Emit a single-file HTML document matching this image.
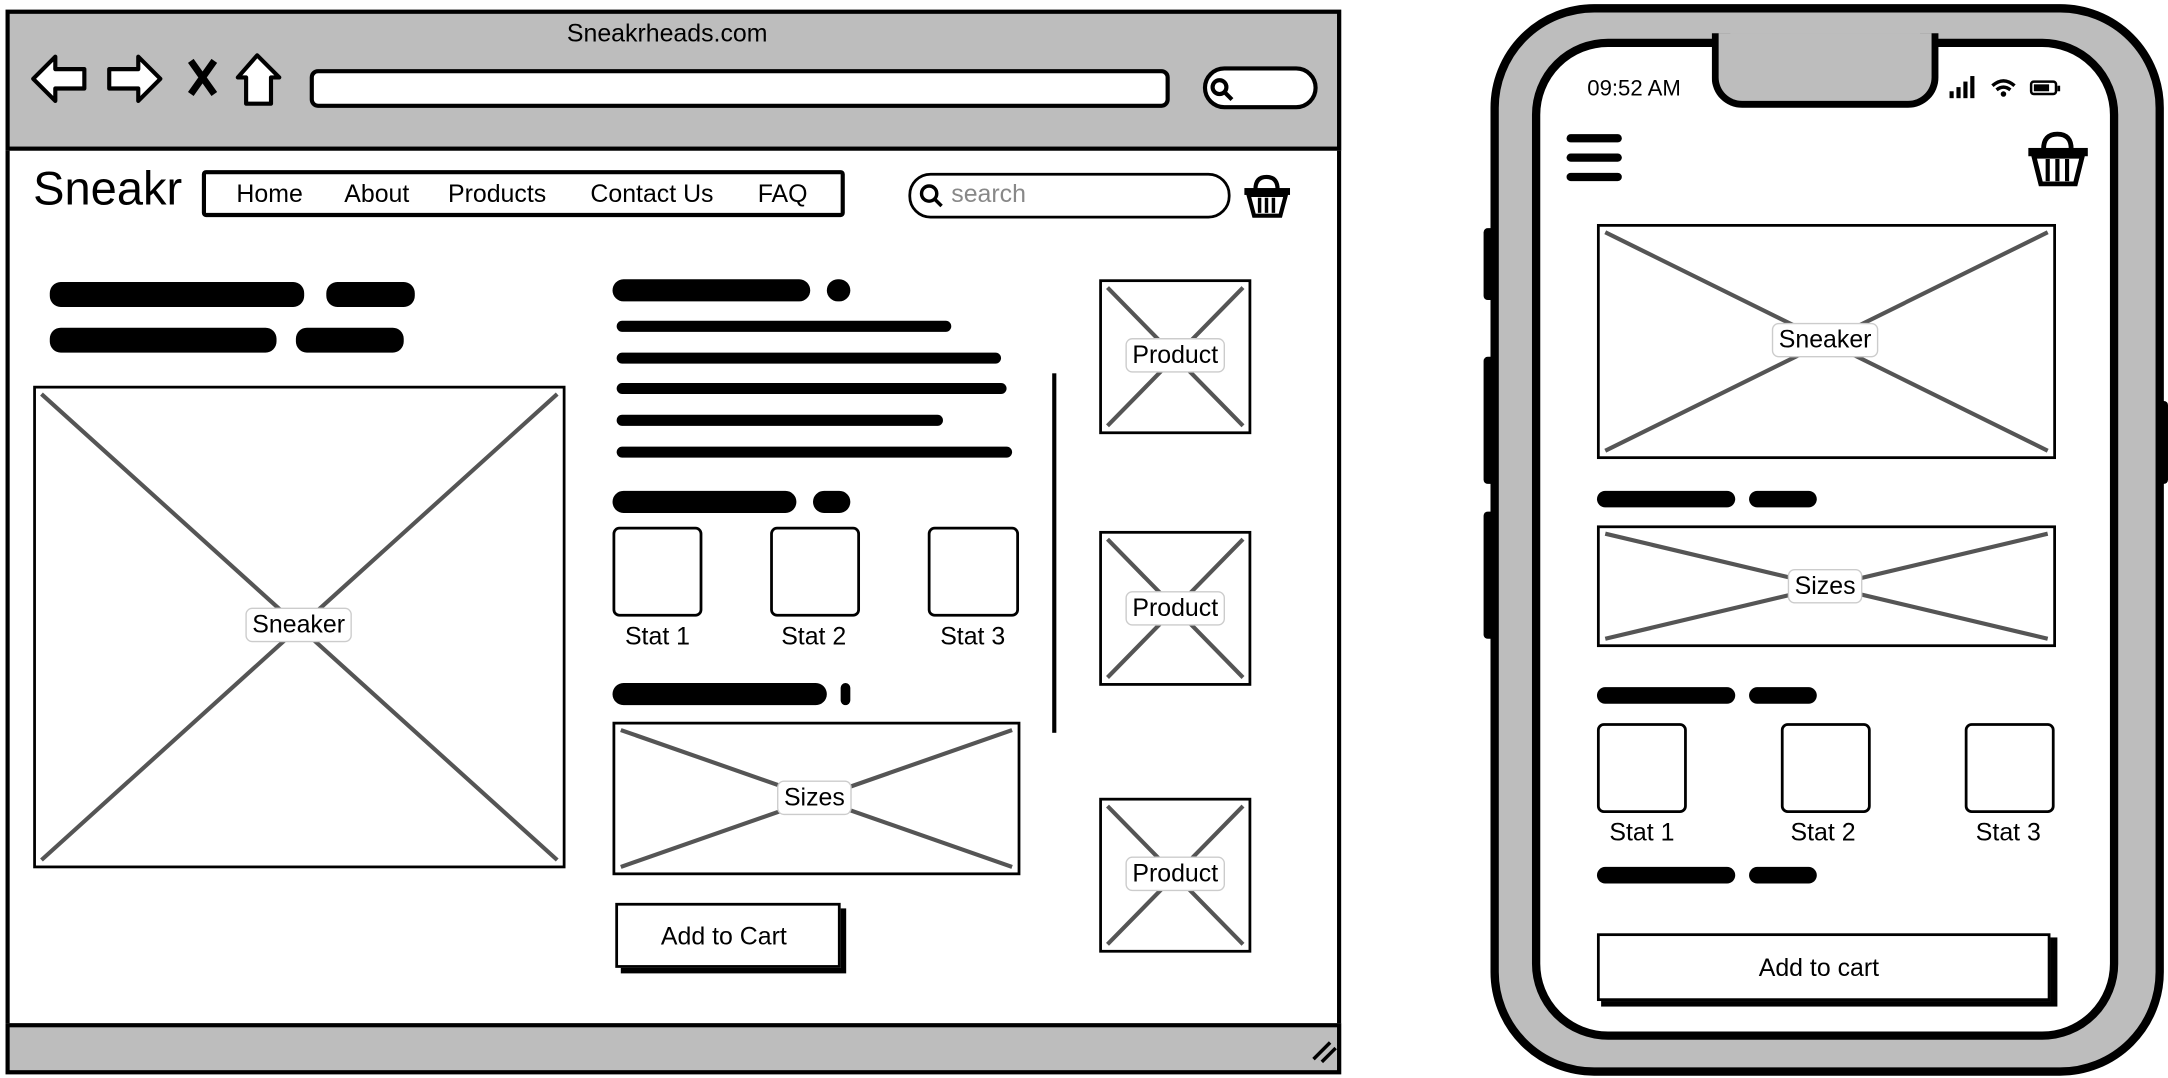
<!DOCTYPE html>
<html><head><meta charset="utf-8"><style>
html,body{margin:0;padding:0;width:2168px;height:1078px;overflow:hidden;background:#fff}
#w{position:absolute;left:0;top:0;width:1568px;height:780px;transform:scale(1.38265);transform-origin:0 0;font-family:"Liberation Sans",sans-serif;color:#000}
.a{position:absolute;box-sizing:border-box}
.sq{position:absolute;background:#000;border-radius:8px}
.t{position:absolute;font-size:18px;white-space:nowrap}
.lbl{position:absolute;background:#fff;border:1px solid #ccc;border-radius:5px;font-size:18px;padding:1px 4px;transform:translate(-50%,-50%)}
.box{position:absolute;border:2.5px solid #000;box-sizing:border-box;background:#fff}
</style></head><body><div id="w">
<!-- browser -->
<div class="a" style="left:4px;top:7px;width:966px;height:770px;border:3px solid #000;background:#fff"></div>
<div class="a" style="left:4px;top:7px;width:966px;height:102px;border:3px solid #000;background:#bdbdbd"></div>
<div class="a" style="left:4px;top:740px;width:966px;height:37px;border:3px solid #000;background:#bdbdbd"></div>
<div class="t" style="left:410px;top:14px">Sneakrheads.com</div>
<svg class="a" style="left:0;top:0" width="980" height="780">
<g fill="#fff" stroke="#000" stroke-width="3" stroke-linejoin="round">
<path d="M24 57 L40 41 L40 50 L61 50 L61 64 L40 64 L40 73 Z"/>
<path d="M116 57 L100 41 L100 50 L79 50 L79 64 L100 64 L100 73 Z"/>
<path d="M186 40 L172 56 L178 56 L178 75 L196 75 L196 56 L202 56 Z"/>
</g>
<path d="M138 44 L155 68 M155 44 L138 68" stroke="#000" stroke-width="5"/>
<path d="M950 766 L962 754 M956 768 L966 758" stroke="#000" stroke-width="2.5"/>
</svg>
<div class="a" style="left:224px;top:50px;width:622px;height:28px;border:3px solid #000;border-radius:6px;background:#fff"></div>
<div class="a" style="left:870px;top:48px;width:83px;height:31px;border:3px solid #000;border-radius:16px;background:#fff"></div>
<svg class="a" style="left:874px;top:55px" width="20" height="20"><circle cx="8" cy="8" r="5" fill="none" stroke="#000" stroke-width="3"/><path d="M12 12 L17 17" stroke="#000" stroke-width="3"/></svg>
<div class="t" style="left:24px;top:118px;font-size:34px">Sneakr</div>
<div class="a" style="left:146px;top:123px;width:465px;height:34px;border:3px solid #000;border-radius:3px"></div>
<div class="t" style="left:171px;top:130px">Home</div>
<div class="t" style="left:249px;top:130px">About</div>
<div class="t" style="left:324px;top:130px">Products</div>
<div class="t" style="left:427px;top:130px">Contact Us</div>
<div class="t" style="left:548px;top:130px">FAQ</div>
<div class="a" style="left:657px;top:125px;width:233px;height:33px;border:2.5px solid #000;border-radius:16px"></div>
<svg class="a" style="left:664px;top:132px" width="20" height="20"><circle cx="8" cy="8" r="5.5" fill="none" stroke="#000" stroke-width="2.5"/><path d="M12 12 L17 17" stroke="#000" stroke-width="2.5"/></svg>
<div class="t" style="left:688px;top:130px;color:#888">search</div>
<svg class="a" style="left:898px;top:125px" width="38" height="34"><path d="M10 12 Q10 3 18 3 Q26 3 26 12" fill="none" stroke="#000" stroke-width="3"/><rect x="2" y="11" width="33" height="5" fill="#000"/><path d="M5 16 L9 31 L28 31 L32 16 Z" fill="#fff" stroke="#000" stroke-width="3"/><path d="M13 18 V29 M18 18 V29 M23 18 V29" stroke="#000" stroke-width="2.5"/></svg>
<!-- scribbles -->
<div class="sq" style="left:36px;top:204px;width:184px;height:18px"></div>
<div class="sq" style="left:236px;top:204px;width:64px;height:18px"></div>
<div class="sq" style="left:36px;top:237px;width:164px;height:18px"></div>
<div class="sq" style="left:214px;top:237px;width:78px;height:18px"></div>
<!-- big image -->
<div class="box" style="left:24px;top:279px;width:385px;height:349px"></div>
<svg class="a" style="left:24px;top:279px" width="385" height="349"><path d="M6 6 L379 343 M379 6 L6 343" stroke="#555" stroke-width="3"/></svg>
<div class="lbl" style="left:216px;top:452px">Sneaker</div>
<!-- right column -->
<div class="sq" style="left:443px;top:202px;width:143px;height:16px"></div>
<div class="sq" style="left:598px;top:202px;width:17px;height:16px"></div>
<div class="sq" style="left:446px;top:232px;width:242px;height:8px;border-radius:4px"></div>
<div class="sq" style="left:446px;top:255px;width:278px;height:8px;border-radius:4px"></div>
<div class="sq" style="left:446px;top:277px;width:282px;height:8px;border-radius:4px"></div>
<div class="sq" style="left:446px;top:300px;width:236px;height:8px;border-radius:4px"></div>
<div class="sq" style="left:446px;top:323px;width:286px;height:8px;border-radius:4px"></div>
<div class="sq" style="left:443px;top:355px;width:133px;height:16px"></div>
<div class="sq" style="left:588px;top:355px;width:27px;height:16px"></div>
<div class="box" style="left:443px;top:381px;width:65px;height:65px;border-radius:5px"></div>
<div class="box" style="left:557px;top:381px;width:65px;height:65px;border-radius:5px"></div>
<div class="box" style="left:671px;top:381px;width:66px;height:65px;border-radius:5px"></div>
<div class="t" style="left:452px;top:450px">Stat 1</div>
<div class="t" style="left:565px;top:450px">Stat 2</div>
<div class="t" style="left:680px;top:450px">Stat 3</div>
<div class="sq" style="left:443px;top:494px;width:155px;height:16px"></div>
<div class="sq" style="left:608px;top:494px;width:7px;height:16px"></div>
<div class="box" style="left:443px;top:522px;width:295px;height:111px"></div>
<svg class="a" style="left:443px;top:522px" width="295" height="111"><path d="M6 6 L289 105 M289 6 L6 105" stroke="#555" stroke-width="3"/></svg>
<div class="lbl" style="left:589px;top:577px">Sizes</div>
<div class="a" style="left:449px;top:657px;width:163px;height:47px;background:#000"></div>
<div class="box" style="left:445px;top:653px;width:163px;height:47px;border-width:2px"></div>
<div class="t" style="left:478px;top:667px">Add to Cart</div>
<div class="a" style="left:761px;top:270px;width:3px;height:260px;background:#000"></div>
<!-- products -->
<div class="box" style="left:795px;top:202px;width:110px;height:112px"></div>
<div class="box" style="left:795px;top:384px;width:110px;height:112px"></div>
<div class="box" style="left:795px;top:577px;width:110px;height:112px"></div>
<svg class="a" style="left:795px;top:0" width="110" height="700"><g stroke="#555" stroke-width="3"><path d="M6 208 L104 308 M104 208 L6 308"/><path d="M6 390 L104 490 M104 390 L6 490"/><path d="M6 583 L104 683 M104 583 L6 683"/></g></svg>
<div class="lbl" style="left:850px;top:257px">Product</div>
<div class="lbl" style="left:850px;top:440px">Product</div>
<div class="lbl" style="left:850px;top:632px">Product</div>
<!-- phone -->
<div class="a" style="left:1073px;top:165px;width:10px;height:52px;background:#000;border-radius:3px"></div>
<div class="a" style="left:1073px;top:258px;width:10px;height:92px;background:#000;border-radius:3px"></div>
<div class="a" style="left:1073px;top:370px;width:10px;height:92px;background:#000;border-radius:3px"></div>
<div class="a" style="left:1558px;top:290px;width:10px;height:60px;background:#000;border-radius:3px"></div>
<div class="a" style="left:1078px;top:3px;width:487px;height:775px;border:6px solid #000;border-radius:75px;background:#bdbdbd"></div>
<div class="a" style="left:1108px;top:28px;width:424px;height:724px;border:6px solid #000;border-radius:55px;background:#fff"></div>
<div class="a" style="left:1238px;top:24px;width:164px;height:54px;border:5px solid #000;border-top:none;border-radius:0 0 22px 22px;background:#bdbdbd"></div>
<div class="t" style="left:1148px;top:56px;font-size:16px">09:52 AM</div>
<svg class="a" style="left:1408px;top:54px" width="85" height="18"><g fill="#000"><rect x="2" y="12" width="3" height="5"/><rect x="7" y="9" width="3" height="8"/><rect x="12" y="5" width="3" height="12"/><rect x="17" y="1" width="3" height="16"/></g><path d="M33 8 Q41 1 49 8 M36 11 Q41 7 46 11" fill="none" stroke="#000" stroke-width="2.5"/><circle cx="41" cy="14" r="2" fill="#000"/><rect x="61" y="5" width="18" height="9" rx="2" fill="none" stroke="#000" stroke-width="1.8"/><rect x="63" y="7" width="11" height="5" fill="#000"/><rect x="80" y="8" width="2" height="4" fill="#000"/></svg>
<div class="a" style="left:1133px;top:97px;width:40px;height:6px;background:#000;border-radius:3px"></div>
<div class="a" style="left:1133px;top:111px;width:40px;height:6px;background:#000;border-radius:3px"></div>
<div class="a" style="left:1133px;top:125px;width:40px;height:6px;background:#000;border-radius:3px"></div>
<svg class="a" style="left:1465px;top:94px" width="48" height="42"><path d="M13 14 Q13 3 23 3 Q33 3 33 14" fill="none" stroke="#000" stroke-width="3.5"/><rect x="2" y="13" width="43" height="6" fill="#000"/><path d="M6 19 L11 39 L36 39 L41 19 Z" fill="#fff" stroke="#000" stroke-width="3.5"/><path d="M16 21 V37 M23 21 V37 M30 21 V37" stroke="#000" stroke-width="3"/></svg>
<div class="box" style="left:1155px;top:162px;width:332px;height:170px"></div>
<svg class="a" style="left:1155px;top:162px" width="332" height="170"><path d="M6 6 L326 164 M326 6 L6 164" stroke="#555" stroke-width="3"/></svg>
<div class="lbl" style="left:1320px;top:246px">Sneaker</div>
<div class="sq" style="left:1155px;top:355px;width:100px;height:12px"></div>
<div class="sq" style="left:1265px;top:355px;width:49px;height:12px"></div>
<div class="box" style="left:1155px;top:380px;width:332px;height:88px"></div>
<svg class="a" style="left:1155px;top:380px" width="332" height="88"><path d="M6 6 L326 82 M326 6 L6 82" stroke="#555" stroke-width="3"/></svg>
<div class="lbl" style="left:1320px;top:424px">Sizes</div>
<div class="sq" style="left:1155px;top:497px;width:100px;height:12px"></div>
<div class="sq" style="left:1265px;top:497px;width:49px;height:12px"></div>
<div class="box" style="left:1155px;top:523px;width:65px;height:65px;border-radius:5px"></div>
<div class="box" style="left:1288px;top:523px;width:65px;height:65px;border-radius:5px"></div>
<div class="box" style="left:1421px;top:523px;width:65px;height:65px;border-radius:5px"></div>
<div class="t" style="left:1164px;top:592px">Stat 1</div>
<div class="t" style="left:1295px;top:592px">Stat 2</div>
<div class="t" style="left:1429px;top:592px">Stat 3</div>
<div class="sq" style="left:1155px;top:627px;width:100px;height:12px"></div>
<div class="sq" style="left:1265px;top:627px;width:49px;height:12px"></div>
<div class="a" style="left:1158px;top:678px;width:330px;height:50px;background:#000"></div>
<div class="box" style="left:1155px;top:675px;width:328px;height:49px;border-width:2px"></div>
<div class="t" style="left:1272px;top:690px">Add to cart</div>
</div></body></html>
